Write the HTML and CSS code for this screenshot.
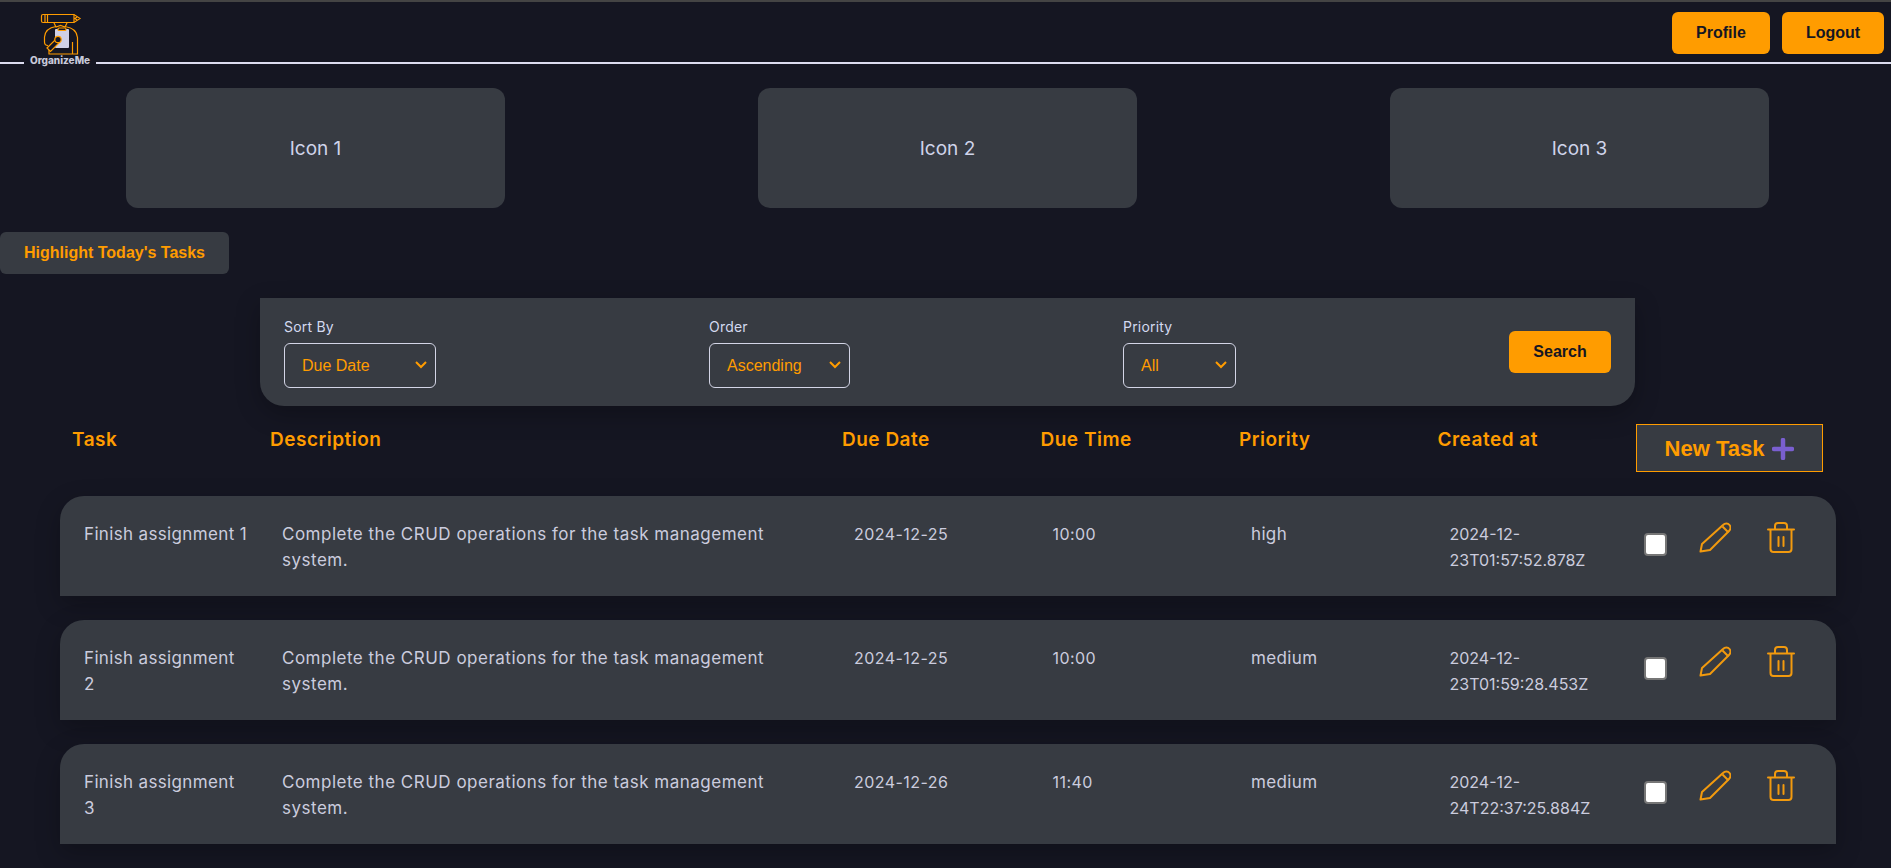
FILE: index.html
```html
<!DOCTYPE HTML>
<html lang="en">
<head>
    <meta charset="UTF-8">
    <meta name="viewport" content="width=device-width, initial-scale=1.0">
    <title>OrganizeMe</title>
    <link rel="stylesheet" href="styles.css">
</head>
<body>
    <header class="topbar">
        <div class="logo">
            <svg class="logo-mark" viewBox="0 0 44 44" width="44" height="44" fill="none" stroke="#ff9c00" stroke-width="1.200">
                <!-- pencil -->
                <path d="M5 2.500h31l6 4-6 4H5a1.500 1.500 0 0 1-1.500-1.500V4A1.500 1.500 0 0 1 5 2.500z"/>
                <path d="M7 2.500v8M9.500 2.500v8M36 2.500v8M39 5l-2 1.500 2 1.500"/>
                <!-- collar -->
                <path d="M16 11l2 4 4.500-1.500L27 15l2-4"/>
                <!-- body -->
                <path d="M18 14.500C11 15.500 7 19 6.500 25v5c0 2 1 3.500 3.500 3.500"/>
                <path d="M27 14.500c7 1 12 4.500 12.500 11V42H11v-7"/>
                <path d="M34.500 30v12"/>
                <!-- clipboard -->
                <rect x="17" y="17" width="14" height="19" rx="1" fill="#cfd0e6" stroke="none"/>
                <rect x="20" y="16" width="8" height="2.500" rx="1" fill="#151622"/>
                <!-- arm and hand -->
                <path d="M9 36l9-9 3.500 3.500-9 9z" fill="#151622"/>
                <circle cx="20" cy="27.500" r="3.200" fill="#151622"/>
            </svg>
            <span class="logo-name">OrganizeMe</span>
        </div>
        <nav class="top-actions">
            <button class="btn">Profile</button>
            <button class="btn logout">Logout</button>
        </nav>
    </header>

    <section class="cards">
        <div class="card">Icon 1</div>
        <div class="card">Icon 2</div>
        <div class="card">Icon 3</div>
    </section>

    <button class="highlight">Highlight Today's Tasks</button>

    <form class="filters">
        <div class="field">
            <label>Sort By</label>
            <div class="select-wrap sort">
                <select class="select"><option>Due Date</option></select>
                <svg class="chevron" viewBox="0 0 12 8" width="12" height="8" fill="none" stroke="#ff9c00" stroke-width="2"><path d="M1 1l5 5 5-5"/></svg>
            </div>
        </div>
        <div class="field">
            <label>Order</label>
            <div class="select-wrap order">
                <select class="select"><option>Ascending</option></select>
                <svg class="chevron" viewBox="0 0 12 8" width="12" height="8" fill="none" stroke="#ff9c00" stroke-width="2"><path d="M1 1l5 5 5-5"/></svg>
            </div>
        </div>
        <div class="field">
            <label>Priority</label>
            <div class="select-wrap prio">
                <select class="select"><option>All</option></select>
                <svg class="chevron" viewBox="0 0 12 8" width="12" height="8" fill="none" stroke="#ff9c00" stroke-width="2"><path d="M1 1l5 5 5-5"/></svg>
            </div>
        </div>
        <button type="button" class="btn search">Search</button>
    </form>

    <main class="tasks">
        <div class="task-head">
            <div>Task</div>
            <div>Description</div>
            <div>Due Date</div>
            <div>Due Time</div>
            <div>Priority</div>
            <div>Created at</div>
            <div>
                <button class="new-task">New Task
                    <svg viewBox="0 0 22 22" width="22" height="22" stroke="#7a5fd0" stroke-width="4.500" stroke-linecap="round"><path d="M11 2v18M2 11h18"/></svg>
                </button>
            </div>
        </div>

        <div class="task-row">
            <div class="name">Finish assignment 1</div>
            <div class="desc">Complete the CRUD operations for the task management system.</div>
            <div class="date">2024-12-25</div>
            <div class="date">10:00</div>
            <div>high</div>
            <div class="stamp">2024-12-23T01:57:52.878Z</div>
            <div class="row-actions">
                <input type="checkbox" class="check">
                <svg class="icon" viewBox="0 0 32 32" width="32" height="32" fill="none" stroke="#f29a0e" stroke-width="2" stroke-linejoin="round"><path d="M1.500 29.500L3 22 24 3c2-2 5-2 6.500 0s1.500 4-.500 6L11 28z"/><path d="M23.500 4.500l6 6"/></svg>
                <svg class="icon trash" viewBox="0 0 28 32" width="28" height="32" fill="none" stroke="#f29a0e" stroke-width="2" stroke-linecap="round"><path d="M1 7.500h26M8 7.500V4c0-2 1-3 3-3h6c2 0 3 1 3 3v3.500M3.500 7.500V27c0 2 1 3 3 3h15c2 0 3-1 3-3V7.500M11.500 15v9M16.500 15v9"/></svg>
            </div>
        </div>

        <div class="task-row">
            <div class="name">Finish assignment<br>2</div>
            <div class="desc">Complete the CRUD operations for the task management system.</div>
            <div class="date">2024-12-25</div>
            <div class="date">10:00</div>
            <div>medium</div>
            <div class="stamp">2024-12-23T01:59:28.453Z</div>
            <div class="row-actions">
                <input type="checkbox" class="check">
                <svg class="icon" viewBox="0 0 32 32" width="32" height="32" fill="none" stroke="#f29a0e" stroke-width="2" stroke-linejoin="round"><path d="M1.500 29.500L3 22 24 3c2-2 5-2 6.500 0s1.500 4-.500 6L11 28z"/><path d="M23.500 4.500l6 6"/></svg>
                <svg class="icon trash" viewBox="0 0 28 32" width="28" height="32" fill="none" stroke="#f29a0e" stroke-width="2" stroke-linecap="round"><path d="M1 7.500h26M8 7.500V4c0-2 1-3 3-3h6c2 0 3 1 3 3v3.500M3.500 7.500V27c0 2 1 3 3 3h15c2 0 3-1 3-3V7.500M11.500 15v9M16.500 15v9"/></svg>
            </div>
        </div>

        <div class="task-row">
            <div class="name">Finish assignment<br>3</div>
            <div class="desc">Complete the CRUD operations for the task management system.</div>
            <div class="date">2024-12-26</div>
            <div class="date">11:40</div>
            <div>medium</div>
            <div class="stamp">2024-12-24T22:37:25.884Z</div>
            <div class="row-actions">
                <input type="checkbox" class="check">
                <svg class="icon" viewBox="0 0 32 32" width="32" height="32" fill="none" stroke="#f29a0e" stroke-width="2" stroke-linejoin="round"><path d="M1.500 29.500L3 22 24 3c2-2 5-2 6.500 0s1.500 4-.500 6L11 28z"/><path d="M23.500 4.500l6 6"/></svg>
                <svg class="icon trash" viewBox="0 0 28 32" width="28" height="32" fill="none" stroke="#f29a0e" stroke-width="2" stroke-linecap="round"><path d="M1 7.500h26M8 7.500V4c0-2 1-3 3-3h6c2 0 3 1 3 3v3.500M3.500 7.500V27c0 2 1 3 3 3h15c2 0 3-1 3-3V7.500M11.500 15v9M16.500 15v9"/></svg>
            </div>
        </div>
    </main>
</body>
</html>
```

FILE: styles.css
```css
* {
    box-sizing: border-box;
}

body {
    margin: 0;
    height: 868px;
    overflow: hidden;
    background-color: #151622;
    color: #cbccde;
    font-family: Inter, "Open Sans", sans-serif;
}

.topbar {
    display: flex;
    justify-content: space-between;
    align-items: flex-start;
    height: 64px;
    border-top: 2px solid #444;
    border-bottom: 2px solid #dcdcef;
    padding: 10px 7px 0 24px;
}

.logo {
    display: flex;
    flex-direction: column;
    align-items: center;
    width: 72px;
    height: 58px;
    background-color: #151622;
}

.logo-name {
    font-size: 10px;
    font-weight: 800;
    line-height: 11px;
    margin-top: -1px;
    color: #c8c9da;
}

.top-actions {
    display: flex;
    gap: 12px;
}

.btn {
    background-color: #ff9c00;
    color: #151622;
    border: none;
    border-radius: 6px;
    font-family: "Liberation Sans", Arial, sans-serif;
    font-size: 16px;
    font-weight: bold;
    width: 98px;
    height: 42px;
}

.logout {
    width: 102px;
}

.cards {
    display: grid;
    grid-template-columns: repeat(3, 379px);
    gap: 253px;
    padding-left: 126px;
    margin-top: 24px;
}

.card {
    display: flex;
    align-items: center;
    justify-content: center;
    height: 120px;
    background-color: #373b42;
    border-radius: 12px;
    font-size: 19px;
    color: #cfd4ea;
}

.highlight {
    display: block;
    width: 229px;
    height: 42px;
    margin-top: 24px;
    padding-bottom: 2px;
    background-color: #373b42;
    color: #ff9c00;
    border: none;
    border-radius: 6px;
    font-family: "Liberation Sans", Arial, sans-serif;
    font-size: 16px;
    font-weight: bold;
}

.filters {
    display: flex;
    justify-content: space-between;
    align-items: center;
    width: 1375px;
    height: 108px;
    margin: 24px 0 0 260px;
    padding: 0 24px;
    background-color: #373b42;
    border-radius: 0 0 24px 24px;
    box-shadow: 0 8px 24px rgba(0, 0, 0, 0.25);
}

.field {
    display: flex;
    flex-direction: column;
}

.field label {
    font-size: 14px;
    letter-spacing: 0.2px;
    line-height: 21px;
    margin-bottom: 6px;
    color: #d3d9f0;
}

.select-wrap {
    position: relative;
    height: 45px;
}

.select {
    appearance: none;
    width: 100%;
    height: 100%;
    padding-left: 17px;
    background-color: transparent;
    color: #ff9c00;
    border: 1px solid #d3d5e6;
    border-radius: 6px;
    font-family: "Liberation Sans", Arial, sans-serif;
    font-size: 16px;
}

.chevron {
    position: absolute;
    right: 9px;
    top: 18px;
}

.sort {
    width: 152px;
}

.order {
    width: 141px;
}

.prio {
    width: 113px;
}

.search {
    width: 102px;
    padding-bottom: 1px;
}

.tasks {
    margin: 18px 55px 0 60px;
}

.task-head,
.task-row {
    display: grid;
    grid-template-columns: 198px 572px 198.500px 198.500px 198.500px 198.500px 1fr;
}

.task-head {
    height: 48px;
    margin-bottom: 24px;
    color: #ff9c00;
    font-size: 19px;
    font-weight: 600;
    letter-spacing: 0.5px;
    line-height: 31px;
}

.task-head > div {
    padding-left: 12px;
}

.new-task {
    display: flex;
    align-items: center;
    justify-content: center;
    gap: 8px;
    width: 187px;
    height: 48px;
    padding: 2px 0 0;
    background-color: #373b42;
    color: #ff9c00;
    border: 1px solid #ff9c00;
    font-family: "Liberation Sans", Arial, sans-serif;
    font-size: 22px;
    font-weight: bold;
    letter-spacing: 0;
}

.task-row {
    height: 100px;
    margin-bottom: 24px;
    padding-top: 25px;
    background-color: #373b42;
    border-radius: 24px 24px 0 0;
    box-shadow: 0 8px 24px rgba(0, 0, 0, 0.25);
    font-size: 17px;
    letter-spacing: 0.35px;
    line-height: 26px;
}

.task-row > div {
    padding: 0 24px;
}

.task-row > .name {
    padding-right: 0;
    white-space: nowrap;
}

.task-row > .desc {
    padding-right: 40px;
    letter-spacing: 0.5px;
}

.task-row > .date {
    font-size: 16px;
    letter-spacing: 0.45px;
}

.task-row > .stamp {
    font-size: 16px;
    letter-spacing: 0;
    padding-right: 20px;
}

.task-row > .row-actions {
    display: flex;
    align-items: flex-start;
    padding: 1px 0 0 20px;
}

.check {
    appearance: none;
    width: 23px;
    height: 23px;
    margin: 11px 32px 0 0;
    background-color: #fff;
    border: 2px solid #767676;
    border-radius: 4px;
}

.trash {
    margin-left: 36px;
}
```
